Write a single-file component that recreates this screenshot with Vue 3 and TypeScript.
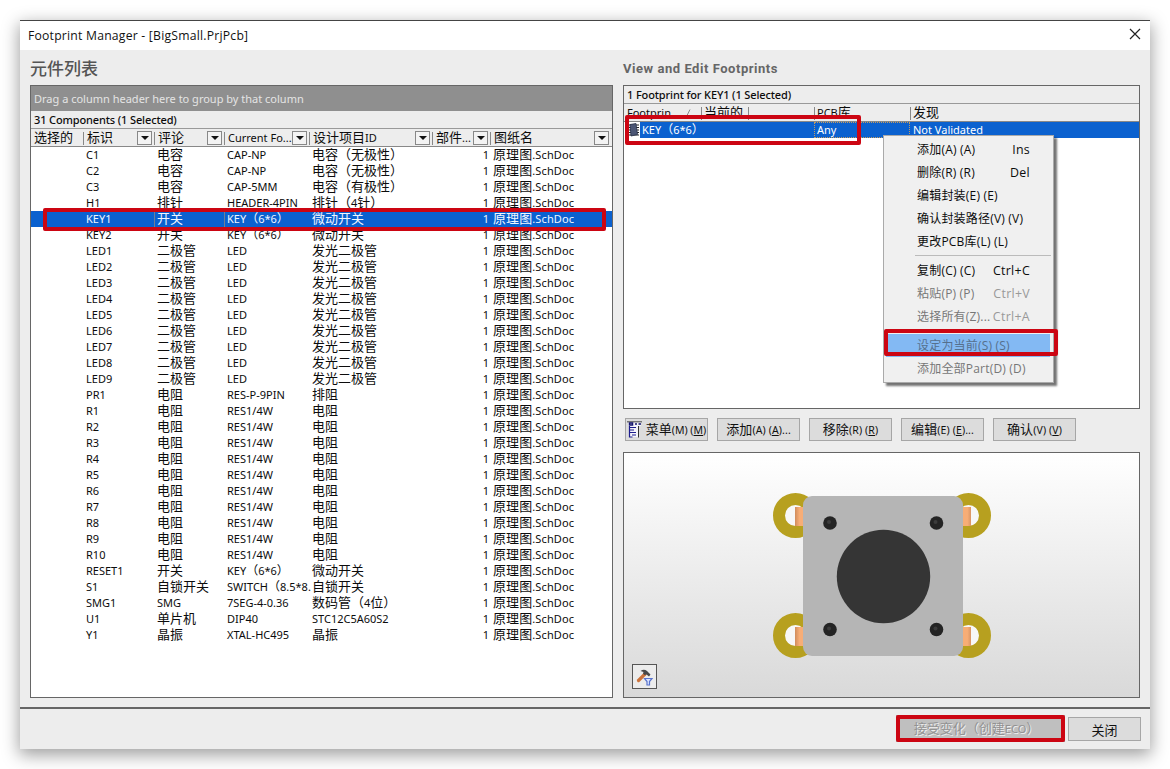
<script setup lang="ts">
import { h, type FunctionalComponent } from 'vue'

// Ideographs are set larger than the Latin text that surrounds them.
const Mixed: FunctionalComponent<{ text: string }> = (props) =>
  h(
    'span',
    { class: 'mixed' },
    props.text
      .split(/([\u4e00-\u9fff]+|[（）])/)
      .filter((part) => part.length > 0)
      .map((part) => {
        const lead = /^[\u4e00-\u9fff]/.test(props.text)
        const kind = /[\u4e00-\u9fff]/.test(part) ? 'han' : /[（）]/.test(part) ? (lead ? 'wide big' : 'wide') : 'latin'
        return h('span', { class: kind }, part)
      }),
  )
Mixed.props = ['text']

type Row = [id: string, comment: string, footprint: string, item: string]

const led = (n: number): Row => [`LED${n}`, '二极管', 'LED', '发光二极管']
const resistor = (n: number): Row => [`R${n}`, '电阻', 'RES1/4W', '电阻']
const range = (n: number): number[] => Array.from({ length: n }, (_, i) => i + 1)

const rows: Row[] = [
  ['C1', '电容', 'CAP-NP', '电容（无极性）'],
  ['C2', '电容', 'CAP-NP', '电容（无极性）'],
  ['C3', '电容', 'CAP-5MM', '电容（有极性）'],
  ['H1', '排针', 'HEADER-4PIN', '排针（4针）'],
  ['KEY1', '开关', 'KEY（6*6）', '微动开关'],
  ['KEY2', '开关', 'KEY（6*6）', '微动开关'],
  ...range(9).map(led),
  ['PR1', '电阻', 'RES-P-9PIN', '排阻'],
  ...range(10).map(resistor),
  ['RESET1', '开关', 'KEY（6*6）', '微动开关'],
  ['S1', '自锁开关', 'SWITCH（8.5*8.', '自锁开关'],
  ['SMG1', 'SMG', '7SEG-4-0.36', '数码管（4位）'],
  ['U1', '单片机', 'DIP40', 'STC12C5A60S2'],
  ['Y1', '晶振', 'XTAL-HC495', '晶振'],
]

const columns = [
  { title: '选择的', filter: false },
  { title: '标识', filter: true },
  { title: '评论', filter: true },
  { title: 'Current Fo...', filter: true },
  { title: '设计项目ID', filter: true },
  { title: '部件...', filter: true },
  { title: '图纸名', filter: true },
]

interface MenuItem {
  label: string
  keys?: string
  state?: 'disabled' | 'hot'
  divider?: boolean
}
const menu: MenuItem[] = [
  { label: '添加(A) (A)', keys: 'Ins' },
  { label: '删除(R) (R)', keys: 'Del' },
  { label: '编辑封装(E) (E)' },
  { label: '确认封装路径(V) (V)' },
  { label: '更改PCB库(L) (L)' },
  { label: '复制(C) (C)', keys: 'Ctrl+C', divider: true },
  { label: '粘贴(P) (P)', keys: 'Ctrl+V', state: 'disabled' },
  { label: '选择所有(Z)...', keys: 'Ctrl+A', state: 'disabled' },
  { label: '设定为当前(S) (S)', state: 'hot', divider: true },
  { label: '添加全部Part(D) (D)', state: 'disabled' },
]

const actions = [
  { label: '菜单', key: 'M', tail: '', icon: true },
  { label: '添加', key: 'A', tail: '...', icon: false },
  { label: '移除', key: 'R', tail: '', icon: false },
  { label: '编辑', key: 'E', tail: '...', icon: false },
  { label: '确认', key: 'V', tail: '', icon: false },
]

const pads = [
  { x: 22.5, y: 23.5 },
  { x: 195.500, y: 23.5 },
  { x: 22.5, y: 143.5 },
  { x: 195.500, y: 143.5 },
]
const pegs = [
  { x: 57, y: 31 },
  { x: 163.5, y: 31 },
  { x: 57, y: 137.5 },
  { x: 163.5, y: 137.5 },
]
</script>

<template>
  <div class="page">
    <div class="window">
      <header class="titlebar">
        <span class="title">Footprint Manager - [BigSmall.PrjPcb]</span>
        <svg class="close" width="12" height="12" viewBox="0 0 12 12">
          <path d="M1 1L11 11M11 1L1 11" stroke="#222" stroke-width="1.2" fill="none" />
        </svg>
      </header>

      <main class="content">
        <section class="left">
          <h2 class="heading-cn">元件列表</h2>
          <div class="grid-panel">
            <div class="groupbar">Drag a column header here to group by that column</div>
            <div class="count">31 Components (1 Selected)</div>
            <div class="cols head">
              <div v-for="c in columns" :key="c.title" class="th">
                <Mixed :text="c.title" />
                <i v-if="c.filter" class="filter"></i>
              </div>
            </div>
            <div v-for="(r, i) in rows" :key="r[0]" class="cols row" :class="{ selected: i === 4 }">
              <div class="td"></div>
              <div class="td"><Mixed :text="r[0]" /></div>
              <div class="td line"><Mixed :text="r[1]" /></div>
              <div class="td line"><Mixed :text="r[2]" /></div>
              <div class="td"><Mixed :text="r[3]" /></div>
              <div class="td num">1</div>
              <div class="td sheet"><Mixed text="原理图.SchDoc" /></div>
            </div>
            <div class="mark mark-row"></div>
          </div>
        </section>

        <section class="right">
          <h2 class="heading-en">View and Edit Footprints</h2>
          <div class="footprints">
            <div class="count">1 Footprint for KEY1 (1 Selected)</div>
            <div class="fcols fhead">
              <div>Footprin<svg class="sort" width="5" height="8" viewBox="0 0 5 8"><path d="M.5 7.500L4 .5" stroke="#888" fill="none" /></svg></div>
              <div><Mixed text="当前的" /></div>
              <div></div>
              <div><Mixed text="PCB库" /></div>
              <div><Mixed text="发现" /></div>
            </div>
            <div class="frow">
              <svg class="chip" width="12" height="16" viewBox="0 0 12 16">
                <path d="M0 3h11M0 5.500h11M0 8h11M0 10.500h11M0 13h11" stroke="#222" stroke-width="1.200" />
                <path d="M2 2.500L8 1.500L9.500 12.500L3 14z" fill="#4b5675" stroke="#263049" stroke-width=".8" />
              </svg>
              <div class="fcols fcells">
                <div><Mixed text="KEY（6*6）" /></div>
                <div></div>
                <div></div>
                <div class="any">Any</div>
                <div>Not Validated</div>
              </div>
            </div>
            <div class="mark mark-key"></div>

            <div class="menu">
              <template v-for="m in menu" :key="m.label">
                <div v-if="m.divider" class="divider"></div>
                <div class="item" :class="m.state">
                  <span class="label">{{ m.label }}</span>
                  <span v-if="m.keys" class="keys">{{ m.keys }}</span>
                </div>
              </template>
              <div class="mark mark-menu"></div>
            </div>
          </div>

          <div class="actions">
            <button v-for="a in actions" :key="a.key" class="btn action" :class="{ first: a.icon }">
              <svg v-if="a.icon" width="15" height="17" viewBox="0 0 15 17">
                <path d="M1 1h13v4h-2v11h-10v-11h-1z" fill="#f5f5fa" />
                <path d="M0 .75h15" stroke="#777" stroke-width="1.500" />
                <path d="M2.500 2h3v2h-3zM8 3h2M11.500 3h2.500" stroke="#14146e" stroke-width="1.500" fill="none" />
                <path d="M2.500 5v11h3M3 6.500h6M3 9h4M3 11.500h6M5 14h4" stroke="#1c1c8e" stroke-width="1.200" fill="none" />
                <path d="M11.500 5v11.500" stroke="#333" fill="none" />
              </svg>
              <span class="btn-text"><span class="han">{{ a.label }}</span>({{ a.key }}) (<u>{{ a.key }}</u>){{ a.tail }}</span>
            </button>
          </div>

          <div class="preview">
            <svg class="part" width="220" height="168" viewBox="0 0 220 168">
              <defs>
                <linearGradient id="copper">
                  <stop offset="0" stop-color="#d08c5c" />
                  <stop offset=".5" stop-color="#f7ad76" />
                  <stop offset="1" stop-color="#f7ad76" />
                </linearGradient>
                <linearGradient id="copper-right">
                  <stop offset="0" stop-color="#f7ad76" />
                  <stop offset=".6" stop-color="#f7ad76" />
                  <stop offset="1" stop-color="#d99565" />
                </linearGradient>
              </defs>
              <g v-for="(p, i) in pads" :key="i">
                <circle :cx="p.x" :cy="p.y" r="16.5" fill="#f7f7f7" stroke="#b7a01f" stroke-width="12" />
                <rect
                  :x="i % 2 ? 189 : 22"
                  :y="p.y - 8.5"
                  width="9"
                  height="19"
                  :fill="i % 2 ? 'url(#copper-right)' : 'url(#copper)'"
                />
              </g>
              <rect x="30" y="4" width="160" height="160" rx="9" fill="#b5b5b5" />
              <circle cx="110.5" cy="84.5" r="46.7" fill="#353535" />
              <g v-for="(p, i) in pegs" :key="'peg' + i">
                <circle :cx="p.x" :cy="p.y" r="6.8" fill="#242424" />
                <circle :cx="p.x - 1" :cy="p.y - 1" r="2" fill="#3c3c3c" />
              </g>
            </svg>
            <div class="tool">
              <svg width="18" height="18" viewBox="0 0 18 18">
                <path d="M2.500 12.500L9 6" stroke="#cc743c" stroke-width="3.200" stroke-linecap="round" />
                <path d="M4.500 3Q8 .5 11 3L14.500 6.500L13 8.500L10.500 6.500L8.500 7L7 5.500L7.500 4z" fill="#484848" />
                <path d="M8.500 10.500h7.500l-2.500 3v3.500h-2.500v-3.500z" fill="#dbe5ff" stroke="#5973ce" stroke-width="1.200" />
              </svg>
            </div>
          </div>
        </section>
      </main>

      <footer class="footer">
        <div class="eco-wrap">
          <button class="btn eco" disabled><Mixed text="接受变化（创建ECO）" /></button>
          <div class="mark mark-eco"></div>
        </div>
        <button class="btn done"><span class="han">关闭</span></button>
      </footer>
    </div>
  </div>
</template>

<style>
body {
  margin: 0;
  background: #fff;
}
</style>

<style scoped>
.page {
  box-sizing: border-box;
  width: 1170px;
  height: 769px;
  padding: 20px;
  overflow: hidden;
  background: #fff;
  font-family: 'Noto Sans', 'Open Sans', 'Noto Sans CJK SC', sans-serif;
  font-size: 11px;
  color: #0c0c0c;
  white-space: nowrap;
}
.window {
  box-sizing: border-box;
  width: 1130px;
  height: 729px;
  background: #ededed;
  border-top: 1px solid #444;
  box-shadow: 0 5px 16px 1px rgba(0, 0, 0, 0.38);
  display: flex;
  flex-direction: column;
}
.titlebar {
  height: 29px;
  flex: none;
  background: #fff;
  display: flex;
  align-items: center;
  justify-content: space-between;
  padding: 0 9px 0 8px;
}
.title {
  font-size: 12.2px;
  font-family: 'Open Sans', sans-serif;
  letter-spacing: 0.22px;
  margin-top: -1px;
  color: #111;
}
.close {
  margin-top: -3px;
}
.content {
  height: 659px;
  flex: none;
  box-sizing: border-box;
  padding: 0 10px;
  display: flex;
  gap: 10px;
  border-bottom: 2px solid #666;
}
.left {
  width: 583px;
}
.right {
  width: 517px;
}
.heading-cn,
.heading-en {
  margin: 0;
  height: 35px;
  color: #555;
}
.heading-cn {
  font: 500 17px/35px 'Noto Sans CJK SC', sans-serif;
}
.heading-en {
  font: 700 13px/38px Roboto, sans-serif;
  letter-spacing: 0.54px;
  color: #666;
}
.grid-panel {
  position: relative;
  box-sizing: border-box;
  height: 613px;
  border: 1px solid #666;
  background: #fff;
}
.groupbar {
  height: 25px;
  line-height: 26px;
  padding-left: 3px;
  background: #8f8f8f;
  color: #e4e4e4;
}
.count {
  height: 17px;
  line-height: 18px;
  padding-left: 3px;
  background: #ededed;
  border-bottom: 1px solid #999;
  font-weight: 500;
  letter-spacing: -0.13px;
}
.mixed {
  white-space: nowrap;
}
:deep(.han),
.han {
  display: inline-block;
  line-height: 13px;
  font-family: 'Noto Sans CJK SC', sans-serif;
  font-size: 13px;
}
:deep(.wide) {
  display: inline-block;
  line-height: 12px;
  font-family: 'Noto Sans CJK SC', sans-serif;
  font-size: 12px;
}
:deep(.wide.big) {
  font-size: 13px;
}
.cols {
  display: grid;
  grid-template-columns: 52px 71px 70px 85px 123px 58px 122px;
}
.head {
  height: 17px;
  line-height: 17px;
  background: #ededed;
  border-bottom: 1px solid #888;
}
.th {
  position: relative;
  display: flex;
  align-items: center;
  justify-content: space-between;
  padding: 0 2px 0 3px;
}
.th + .th {
  padding-left: 4px;
}
.th:last-child {
  padding-right: 3px;
}
.th + .th::before {
  content: '';
  position: absolute;
  left: 0;
  top: 3px;
  height: 13px;
  border-left: 1px solid #888;
}
.filter {
  box-sizing: border-box;
  width: 15px;
  height: 14px;
  border: 1px solid #888;
  background: #f3f3f3;
  display: flex;
  align-items: center;
  justify-content: center;
}
.filter::before {
  content: '';
  border: 4px solid transparent;
  border-top: 4px solid #111;
  border-bottom: 0;
}
.row {
  height: 16px;
  line-height: 16px;
}
.td {
  box-sizing: border-box;
  height: 16px;
  padding-left: 3px;
}
.num {
  text-align: right;
  padding-right: 1px;
}
.sheet {
  letter-spacing: 0.1px;
}
.selected {
  background: #0b61cf;
  color: #f0f6ff;
}
.selected .line {
  border-left: 1px solid #6f7d96;
  padding-left: 2px;
}
.mark {
  position: absolute;
  box-sizing: border-box;
  border: 4px solid #cc0512;
  border-radius: 2px;
}
.mark-row {
  left: 12px;
  top: 122px;
  width: 563px;
  height: 23px;
}
.mark-key {
  left: 1px;
  top: 29px;
  width: 236px;
  height: 30px;
}
.mark-menu {
  left: 0;
  top: 193px;
  width: 174px;
  height: 27px;
}
.mark-eco {
  inset: 0;
}
.footprints {
  position: relative;
  box-sizing: border-box;
  height: 324px;
  border: 1px solid #666;
  background: #fff;
}
.fcols {
  display: grid;
  grid-template-columns: 77px 47px 66px 96px 1fr;
}
.fhead {
  height: 17px;
  line-height: 17px;
  background: #ededed;
  border-bottom: 1px solid #888;
}
.fhead > div {
  position: relative;
  padding-left: 3px;
}
.fhead > div + div::before {
  content: '';
  position: absolute;
  left: 0;
  top: 3px;
  height: 13px;
  border-left: 1px solid #888;
}
.sort {
  margin-left: 15px;
}
.frow {
  display: flex;
  height: 16px;
  line-height: 16px;
  padding-left: 4px;
}
.chip {
  flex: none;
}
.fcells {
  flex: 1;
  background: #0b61cf;
  color: #fff;
  grid-template-columns: 61px 47px 66px 96px 1fr;
}
.fcells > div {
  box-sizing: border-box;
  padding-left: 2px;
}
.fcells > div:last-child {
  padding-left: 3px;
}
.fcells > .any {
  border: 1px dotted #c39c62;
  padding-left: 2px;
  line-height: 14px;
}
.menu {
  position: absolute;
  left: 259px;
  top: 49px;
  box-sizing: border-box;
  width: 171px;
  height: 248px;
  padding: 2px 2px 2px;
  border: 1px solid #aaa;
  background: #f0f0f0;
  box-shadow: 3px 3px 2px rgba(0, 0, 0, 0.55);
  font: 12.4px/23px 'Open Sans', 'Noto Sans CJK SC', sans-serif;
}
.item {
  display: flex;
  justify-content: space-between;
  height: 23px;
  padding: 0 21px 0 31px;
}
.label {
  font-size: 12px;
  letter-spacing: 0.2px;
}
.keys {
  letter-spacing: 0.3px;
}
.divider {
  height: 1px;
  margin: 2px 0 3px 29px;
  background: #bbb;
}
.disabled {
  color: #777;
}
.disabled .keys {
  color: #999;
}
.hot {
  background: #83b9f3;
  color: #56708d;
  margin-right: 1px;
}
.actions {
  display: flex;
  gap: 9px;
  padding: 9px 2px 11px;
}
.btn {
  box-sizing: border-box;
  margin: 0;
  border: 1px solid #a6a6a6;
  background: #dcdcdc;
  font-family: inherit;
  font-size: 11px;
  color: #111;
  white-space: nowrap;
  display: flex;
  align-items: center;
  justify-content: center;
  padding: 0;
}
.action {
  width: 83px;
  height: 23px;
}
.btn-text {
  font-size: 10.5px;
  line-height: 20px;
  letter-spacing: 0.12px;
}
.first {
  gap: 4px;
}
.first .btn-text {
  letter-spacing: 0;
}
.preview {
  position: relative;
  box-sizing: border-box;
  height: 246px;
  border: 1px solid #666;
  background: linear-gradient(#fff, #d9d9d9);
}
.part {
  position: absolute;
  left: 149px;
  top: 39px;
}
.tool {
  position: absolute;
  left: 8px;
  top: 211px;
  box-sizing: border-box;
  width: 25px;
  height: 25px;
  border: 1px solid #555;
  background: #ececec;
  display: flex;
  align-items: center;
  justify-content: center;
}
.footer {
  flex: 1;
  display: flex;
  justify-content: flex-end;
  align-items: flex-start;
  gap: 3px;
  padding: 6px 9px 0 0;
}
.eco-wrap {
  position: relative;
  width: 169px;
  height: 27px;
}
.eco {
  width: 100%;
  height: 100%;
  background: #bfbfbf;
  color: #929292;
  text-shadow: 1px 1px 0 #eee;
  padding-right: 8px;
}
.done {
  width: 73px;
  height: 24px;
  margin-top: 2px;
}
</style>
